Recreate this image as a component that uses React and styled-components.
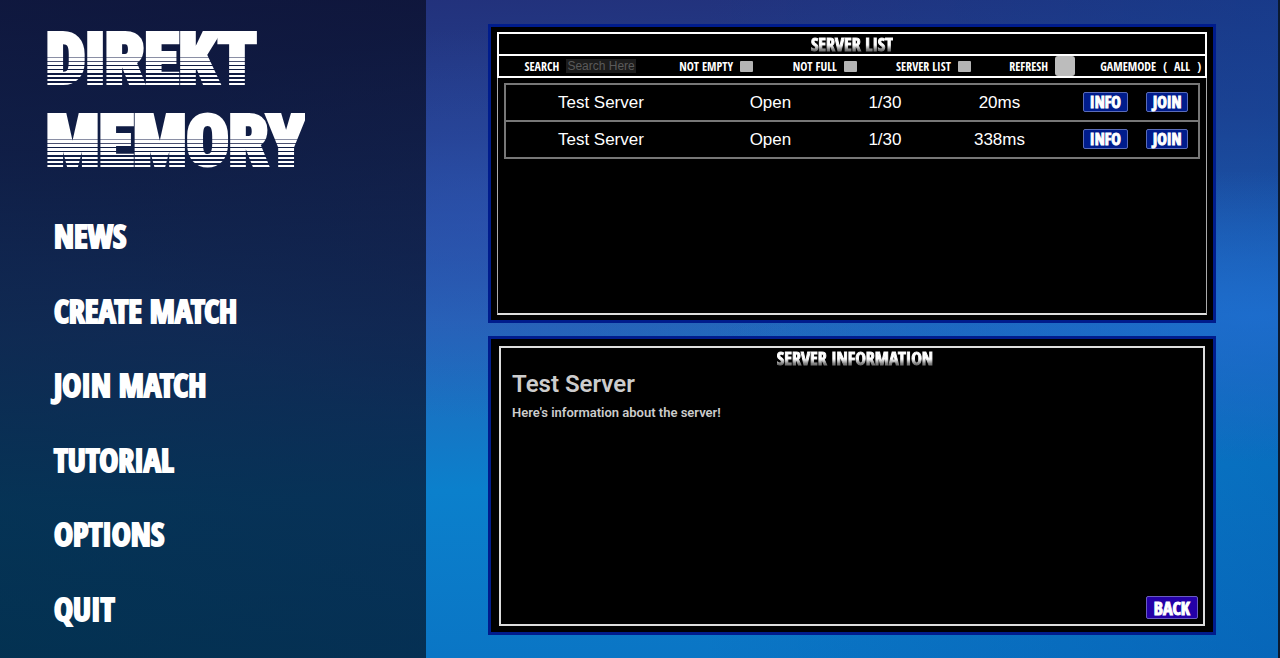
import React, { useState } from "react";
import styled, { createGlobalStyle } from "styled-components";

const displayFont = `"Open Sans Condensed", "Roboto Condensed", "Liberation Sans", sans-serif`;
const titleFont = `"Roboto Condensed", "Liberation Sans", sans-serif`;

const GlobalStyle = createGlobalStyle`
  * {
    box-sizing: border-box;
  }

  body {
    margin: 0;
    background-color: #0b1420;
    font-family: "Liberation Sans", Arial, sans-serif;
    color: white;
  }
`;

const Page = styled.div`
  display: grid;
  grid-template-columns: 1fr 2fr;
  min-height: 100vh;
  border-right: 2px solid #0b1a30;
  background:
    radial-gradient(ellipse at 38% 34%, rgba(48, 80, 178, 0.5), transparent 32%),
    radial-gradient(ellipse at 98% 48%, rgba(30, 112, 210, 0.8), transparent 30%),
    linear-gradient(90deg, transparent 55%, rgba(0, 70, 160, 0.3)),
    linear-gradient(178deg, #22307a 0%, #24418f 22%, #2566ba 48%, #0b80cc 72%, #0a74c4 100%);
`;

/* Sidebar */
const Sidebar = styled.aside`
  display: flex;
  flex-direction: column;
  padding: 18px 46px 33px;
  background: linear-gradient(
    200deg,
    rgba(8, 12, 36, 0.72),
    rgba(8, 18, 44, 0.72) 50%,
    rgba(0, 20, 32, 0.7)
  );
`;

const Title = styled.h1`
  margin: 0;
  font-family: ${titleFont};
  font-size: 70px;
  font-weight: 900;
  line-height: 82px;
`;

/* Scanlines get wider towards the bottom of each line */
const TitleLine = styled.span`
  display: block;
  width: fit-content;
  color: transparent;
  -webkit-text-stroke: 4px transparent;
  background: linear-gradient(
    white 39px, #8a8fa5 39px, #8a8fa5 40px,
    white 40px, white 43px, #4a5070 43px, #4a5070 44px,
    white 44px, white 47px, transparent 47px, transparent 48px,
    white 48px, white 51px, transparent 51px, transparent 52px,
    white 52px, white 55px, transparent 55px, transparent 57px,
    white 57px, white 59px, transparent 59px, transparent 61px,
    white 61px, white 63px, transparent 63px, transparent 65px,
    white 65px
  );
  -webkit-background-clip: text;
  background-clip: text;
`;

const Nav = styled.nav`
  display: flex;
  flex: 1;
  flex-direction: column;
  align-items: flex-start;
  justify-content: space-between;
  gap: 16px;
  margin-top: 38px;
  padding-left: 8px;
`;

const NavItem = styled.a`
  font-family: ${displayFont};
  font-size: 32px;
  font-weight: bold;
  line-height: 32px;
  color: white;
  text-decoration: none;
  -webkit-text-stroke: 2px white;

  &:hover {
    color: #9ec5ff;
  }
`;

/* Panels */
const Content = styled.main`
  display: grid;
  grid-template-rows: 1fr 1fr;
  gap: 13px;
  padding: 24px 62px 23px;
`;

const Panel = styled.section`
  display: flex;
  flex-direction: column;
  padding: ${(props) => props.$padding};
  border: 3px solid #001c8c;
  background-color: black;
`;

const PanelTitle = styled.h2`
  width: fit-content;
  margin: 0 auto;
  font-family: ${displayFont};
  font-size: 18px;
  font-weight: bold;
  line-height: 20px;
  color: transparent;
  -webkit-text-stroke: 1px transparent;
  background: linear-gradient(white 55%, #777 80%);
  -webkit-background-clip: text;
  background-clip: text;
`;

const ListHeader = styled.header`
  border: 2px solid white;
`;

const Filters = styled.form`
  display: grid;
  grid-template-columns: 3fr 2fr 2fr 2fr 2fr 2fr;
  height: 22px;
  border: 2px solid white;
  border-top: none;
  font-family: ${displayFont};
  font-size: 12px;
  font-weight: bold;
`;

const Filter = styled.div`
  display: flex;
  align-items: center;
  justify-content: center;
  gap: 7px;
  white-space: nowrap;
`;

const SearchInput = styled.input`
  width: 70px;
  height: 14px;
  padding: 0 1px;
  border: none;
  background-color: #1c1c1c;
  font-family: "Liberation Sans", Arial, sans-serif;
  font-size: 12px;
  color: #ccc;

  &::placeholder {
    color: #5a5a5a;
  }
`;

const Checkbox = styled.input`
  appearance: none;
  width: 13px;
  height: 11px;
  margin: 0;
  border-radius: 1px;
  background-color: #b4b4b4;

  &:checked {
    background-color: #2a5fd0;
  }
`;

const RefreshButton = styled.button`
  width: 20px;
  height: 20px;
  padding: 0;
  border: none;
  border-radius: 3px;
  background-color: #bcbcbc;
  cursor: pointer;
`;

const ModeButton = styled.button`
  padding: 0;
  border: none;
  background: none;
  font: inherit;
  color: white;
  cursor: pointer;
`;

const ListBody = styled.div`
  flex: 1;
  padding: 5px 6px;
  border: 1px solid #aaa;
  border-top: none;
  border-bottom: 2px solid #ddd;
`;

const ServerTable = styled.table`
  width: 100%;
  table-layout: fixed;
  border-collapse: collapse;
  font-size: 17px;
  text-align: center;

  tr {
    height: 37px;
    border: 2px solid #777;
  }

  td {
    padding: 0;
  }
`;

const Button = styled.button`
  height: ${(props) => (props.$large ? "23px" : "20px")};
  padding: 0 ${(props) => (props.$large ? "7px" : "6px")};
  border: 1px solid ${(props) => (props.$large ? "#6a5cc0" : "#5a6cb8")};
  border-radius: 2px;
  background-color: ${(props) => (props.$large ? "#2400a8" : "#001c8c")};
  font-family: ${displayFont};
  font-size: ${(props) => (props.$large ? "18px" : "16px")};
  font-weight: bold;
  line-height: 18px;
  color: white;
  -webkit-text-stroke: 1px white;
  cursor: pointer;
`;

const InfoFrame = styled.div`
  display: flex;
  flex: 1;
  flex-direction: column;
  padding: 0 5px 5px 11px;
  border: 2px solid #ddd;
`;

const InfoText = styled.div`
  flex: 1;
  font-family: Roboto, sans-serif;
  color: #ccc;

  h3 {
    margin: 0;
    font-size: 24px;
    font-weight: 600;
    line-height: 32px;
  }

  p {
    margin: 3px 0 0;
    font-size: 13px;
    font-weight: 600;
    line-height: 20px;
  }
`;

const PanelFooter = styled.footer`
  display: flex;
  justify-content: flex-end;
`;

const navItems = ["NEWS", "CREATE MATCH", "JOIN MATCH", "TUTORIAL", "OPTIONS", "QUIT"];

const checkFilters = [
  { id: "not-empty", label: "NOT EMPTY" },
  { id: "not-full", label: "NOT FULL" },
  { id: "server-list", label: "SERVER LIST" },
];

const servers = [
  { name: "Test Server", status: "Open", players: "1/30", ping: "20ms" },
  { name: "Test Server", status: "Open", players: "1/30", ping: "338ms" },
];

const App = () => {
  const [search, setSearch] = useState("");
  const [selected, setSelected] = useState(0);

  return (
    <>
      <GlobalStyle />
      <Page>
        <Sidebar>
          <Title>
            <TitleLine>DIREKT</TitleLine>
            <TitleLine>MEMORY</TitleLine>
          </Title>
          <Nav>
            {navItems.map((item) => (
              <NavItem key={item} href="#">
                {item}
              </NavItem>
            ))}
          </Nav>
        </Sidebar>

        <Content>
          {/* Server List */}
          <Panel $padding="5px 6px">
            <ListHeader>
              <PanelTitle>SERVER LIST</PanelTitle>
            </ListHeader>
            <Filters onSubmit={(e) => e.preventDefault()}>
              <Filter>
                <label htmlFor="search">SEARCH</label>
                <SearchInput
                  id="search"
                  placeholder="Search Here"
                  value={search}
                  onChange={(e) => setSearch(e.target.value)}
                />
              </Filter>
              {checkFilters.map((filter) => (
                <Filter key={filter.id}>
                  <label htmlFor={filter.id}>{filter.label}</label>
                  <Checkbox type="checkbox" id={filter.id} />
                </Filter>
              ))}
              <Filter>
                <label htmlFor="refresh">REFRESH</label>
                <RefreshButton type="button" id="refresh" />
              </Filter>
              <Filter>
                <span>GAMEMODE</span>
                <ModeButton type="button">(</ModeButton>
                <span>ALL</span>
                <ModeButton type="button">)</ModeButton>
              </Filter>
            </Filters>
            <ListBody>
              <ServerTable>
                <colgroup>
                  <col width="27.5%" />
                  <col width="21.5%" />
                  <col width="11.5%" />
                  <col width="21.5%" />
                  <col width="9%" />
                  <col width="9%" />
                </colgroup>
                <tbody>
                  {servers.map((server, index) => (
                    <tr key={index}>
                      <td>{server.name}</td>
                      <td>{server.status}</td>
                      <td>{server.players}</td>
                      <td>{server.ping}</td>
                      <td>
                        <Button onClick={() => setSelected(index)}>INFO</Button>
                      </td>
                      <td>
                        <Button>JOIN</Button>
                      </td>
                    </tr>
                  ))}
                </tbody>
              </ServerTable>
            </ListBody>
          </Panel>

          {/* Server Information */}
          <Panel $padding="7px 8px 6px">
            <InfoFrame>
              <PanelTitle>SERVER INFORMATION</PanelTitle>
              <InfoText>
                <h3>{servers[selected].name}</h3>
                <p>Here's information about the server!</p>
              </InfoText>
              <PanelFooter>
                <Button $large>BACK</Button>
              </PanelFooter>
            </InfoFrame>
          </Panel>
        </Content>
      </Page>
    </>
  );
};

export default App;
